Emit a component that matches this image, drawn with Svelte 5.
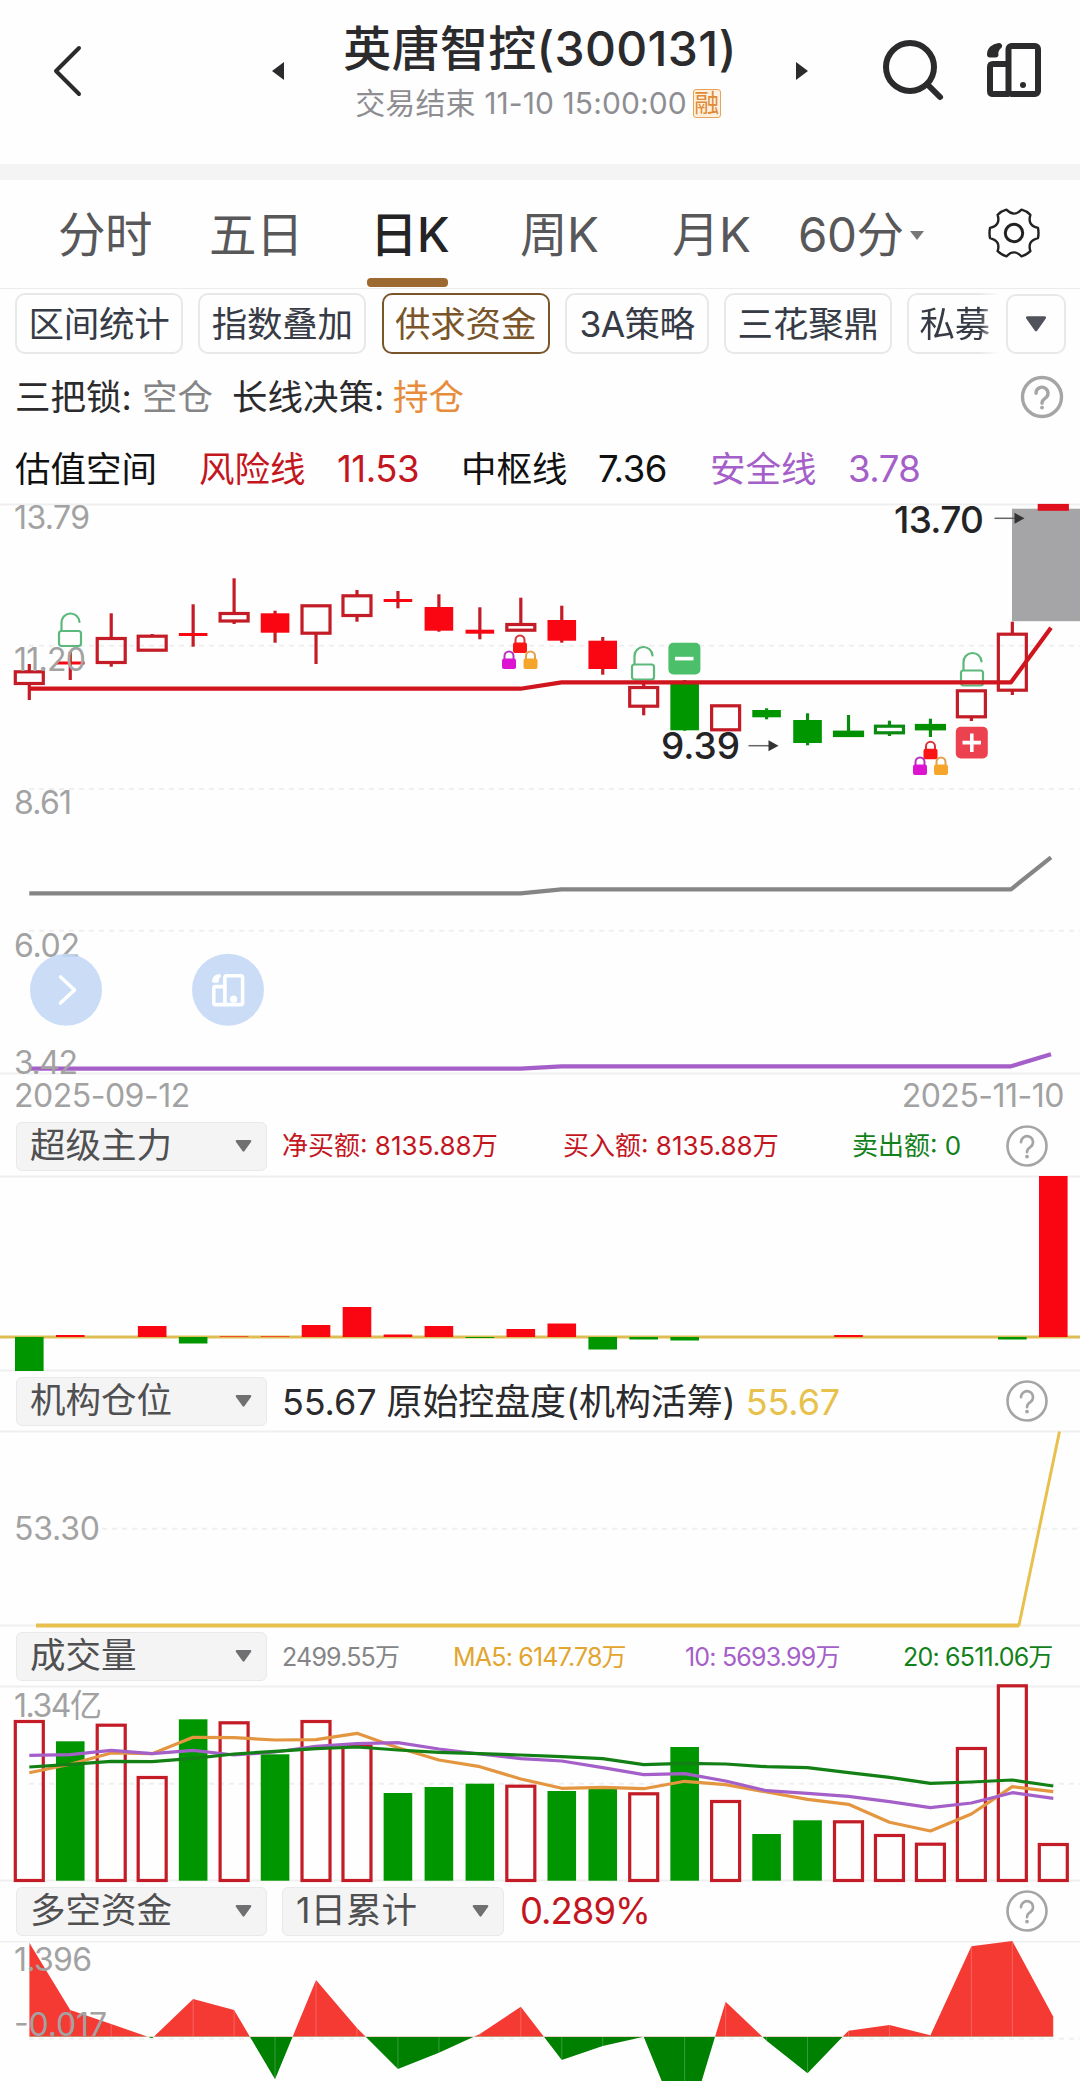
<script lang="ts">
    type Candle = {
        high: number;
        top: number;
        bottom: number;
        low: number;
        kind: 'hollow' | 'red' | 'green' | 'green-hollow';
    };

    const STEP = 40.96;
    const x = (i: number) => 29.3 + i * STEP;

    const tabs = ['分时', '五日', '日K', '周K', '月K'];
    const chips = ['区间统计', '指数叠加', '供求资金', '3A策略', '三花聚鼎', '私募'];

    const candle = (
        high: number,
        top: number,
        bottom: number,
        low: number,
        kind: Candle['kind'] = 'hollow'
    ): Candle => ({ high, top, bottom, low, kind });

    const candles: Candle[] = [
        candle(160, 166.3, 181, 196),
        candle(147.7, 157.5, 160.5, 176, 'red'),
        candle(109.3, 133, 160, 162.7),
        candle(130, 130.7, 147.7, 147.7),
        candle(100.3, 129, 132, 142.7, 'red'),
        candle(74.3, 108, 118.5, 120),
        candle(106.7, 109.3, 128.7, 138.7, 'red'),
        candle(100.3, 100.3, 130.7, 160),
        candle(86, 90.3, 113, 117.7),
        candle(87, 95, 98, 104.3, 'red'),
        candle(90.3, 103, 126.7, 127.7, 'red'),
        candle(103.3, 125.7, 129.7, 135.3, 'red'),
        candle(93.7, 119, 127.7, 127.7),
        candle(101.7, 116, 136.7, 138.7, 'red'),
        candle(133, 136.7, 165, 170.7, 'red'),
        candle(177.7, 182, 203.7, 211.3),
        candle(176, 179.3, 226.3, 226.7, 'green'),
        candle(200.3, 200.3, 227.3, 227.3),
        candle(204.3, 206, 213.3, 215.3, 'green'),
        candle(209.3, 216, 239, 241.3, 'green'),
        candle(211, 226.7, 233, 233, 'green-hollow'),
        candle(216.7, 220.7, 230.3, 232, 'green-hollow'),
        candle(214.7, 220, 226.3, 233, 'green-hollow'),
        candle(185.3, 185.3, 214.3, 217),
        candle(117.7, 128.7, 187.7, 191),
        candle(0, 0, 6.7, 6.7)
    ];

    // positive goes up from the zero line
    const mainForce = [
        -34, 2, 0, 11, -6.5, 0.6, 0.6, 12, 30, 2.5, 11, -1, 8, 13.5, -12.5, -2.5, -3.5, 0, 0, 0, 2, 0,
        0, 0, -2.5, 161
    ];

    const volumeTops = [
        34, 55.3, 37.7, 90, 33.3, 35.3, 68.3, 34, 59, 107, 101, 97.7, 98.7, 105, 103, 106.3, 61, 114,
        148, 134.3, 134.3, 148, 156.7, 61, -1.7, 157
    ];
    const falling = [1, 4, 6, 9, 10, 11, 13, 14, 16, 18, 19];

    const ma5 = [
        86.7, 78.3, 67, 67.7, 51.3, 51.7, 54, 53.7, 47.3, 61.7, 74, 80.7, 93, 102.3, 101.3, 102.7, 95.3,
        98.7, 106, 113.3, 118.3, 136.3, 145, 128, 100.7, 105.7
    ];
    const ma10 = [
        69.3, 68.7, 64.3, 67.7, 64.3, 69, 66, 60.3, 57.7, 56.7, 63, 68, 72.7, 75, 81.7, 88.7, 87.7, 95,
        104.7, 107.3, 110.3, 115.7, 121.7, 117, 106.7, 112.3
    ];
    const ma20 = [
        81, 78.3, 75.3, 75.7, 72.3, 68, 65.3, 62.7, 61, 64, 66.3, 67.7, 69, 70.7, 72.7, 78.7, 77.3, 78,
        80.7, 81.7, 86.7, 91.3, 97.3, 96, 94, 100
    ];

    const funds = [
        1.7, 69, 83, 97.3, 58, 69, 138.3, 39, 87, 128, 111.7, 93, 65.7, 119, 105, 95.7, 196.5, 60.7,
        99.7, 132.3, 89.7, 84, 94.3, 5.3, 0, 75.7
    ];

    const line = (ys: number[]) => ys.map((y, i) => `${x(i)},${y}`).join(' ');
    const fundsArea = `${x(0)},95.7 ${line(funds)} ${x(25)},95.7`;

    const step = (a: number, b: number, c: number) =>
        `29.3,${a} 520.5,${a} 561.6,${b} 1011,${b} 1051,${c}`;
</script>

{#snippet help(cls: string)}
    <svg class="help {cls}" width="44" height="44" viewBox="0 0 44 44">
        <circle cx="22" cy="22" r="19.5" />
        <path d="M16 18.2a6 6 0 1 1 9.3 5c-2.300 1.500-3.300 2.600-3.300 5" />
        <circle class="dot" cx="22" cy="32.600" r="1.900" />
    </svg>
{/snippet}

{#snippet rotateIcon()}
    <rect x="21.500" y="3" width="29.500" height="48" rx="3" />
    <path d="M21 21H6q-3 0-3 3v24q0 3 3 3h16" />
    <path d="M12 3C6.500 3.500 3 7 3 11.500h5.500C7.500 8 9 5.500 12 3Z" />
    <circle class="dot" cx="36" cy="42" r="3" />
{/snippet}

{#snippet caret()}
    <svg class="caret" width="17" height="14" viewBox="0 0 17 14">
        <path d="M2 1h13q2 0 1 2l-6.500 9q-1 1.400-2 0L1 3Q0 1 2 1Z" />
    </svg>
{/snippet}

{#snippet openLock(lx: number, ly: number)}
    <g class="open-lock" transform="translate({lx} {ly})">
        <rect x="1" y="18" width="22" height="15" rx="2.500" />
        <path d="M3.500 17.500V10a9 9 0 0 1 18-1" />
    </g>
{/snippet}

{#snippet lock(lx: number, ly: number, tone: string)}
    <g class="lock {tone}" transform="translate({lx} {ly})">
        <path d="M2.500 10V6a4.500 4.500 0 0 1 9 0v4" />
        <rect x="0" y="8.500" width="14" height="10.500" rx="2" />
    </g>
{/snippet}

{#snippet arrow(ax: number, ay: number)}
    <g class="arrow">
        <path class="shaft" d="M{ax} {ay}h22" />
        <path d="M{ax + 20} {ay - 5.500}l10 5.500l-10 5.500z" />
    </g>
{/snippet}

<div class="page">
    <header>
        <svg class="back" width="34" height="56" viewBox="0 0 34 56">
            <path d="M29 5L6 28l23 23" />
        </svg>
        <svg class="prev" width="12" height="18" viewBox="0 0 12 18"><path d="M12 0v18L0 9z" /></svg>
        <div class="title">
            <h1>英唐智控(300131)</h1>
            <p>交易结束 <span>11-10 15:00:00</span><span class="tag">融</span></p>
        </div>
        <svg class="next" width="12" height="18" viewBox="0 0 12 18"><path d="M0 0v18l12-9z" /></svg>
        <svg class="search" width="64" height="64" viewBox="0 0 64 64">
            <circle cx="29" cy="29" r="24" />
            <path d="M46.500 46.500L59 59" />
        </svg>
        <svg class="device" width="54" height="54" viewBox="0 0 54 54">{@render rotateIcon()}</svg>
    </header>

    <nav>
        {#each tabs as tab (tab)}
            <button class:active={tab === '日K'}>{tab}</button>
        {/each}
        <button class="period">60分<svg width="14" height="9" viewBox="0 0 14 9"><path d="M0 0h14L7 9z" /></svg></button>
        <svg class="gear" width="54" height="54" viewBox="-27 -27 54 54">
            <path
                d="M24 -5.100Q25 0 24 5.100Q13 7.800 16.400 18.200Q12.500 22 7.600 23.300Q0 15.500 -7.600 23.300Q-12.500 22 -16.400 18.200Q-13 7.800 -24 5.100Q-25 0 -24 -5.100Q-13 -7.800 -16.400 -18.200Q-12.500 -22 -7.600 -23.300Q0 -15.500 7.600 -23.300Q12.500 -22 16.400 -18.200Q13 -7.800 24 -5.100Z"
            />
            <circle r="8.700" />
        </svg>
    </nav>

    <div class="chips">
        {#each chips as chip (chip)}
            <button class:active={chip === '供求资金'} class:cut={chip === '私募'} class:short={chip === '3A策略'}>{chip}</button>
        {/each}
        <button class="more">{@render caret()}</button>
    </div>

    <div class="locks">
        <span>三把锁:</span>
        <span class="muted">空仓</span>
        <span>长线决策:</span>
        <span class="hold">持仓</span>
        {@render help('bold')}
    </div>

    <div class="valuation">
        <span>估值空间</span>
        <span class="risk">风险线</span>
        <span class="risk num">11.53</span>
        <span>中枢线</span>
        <span class="num">7.36</span>
        <span class="safe">安全线</span>
        <span class="safe num">3.78</span>
    </div>

    <svg class="chart" width="1080" height="570" viewBox="0 0 1080 570">
        <path class="rule" d="M0 .5H1080M0 569.500H1080" />
        <path class="dash" d="M29 141.700H1080M29 285H1080M29 426.700H1080" />
        <rect class="limit" x="1012" y="4.700" width="68" height="112.500" />

        {#each candles as c, i (i)}
            <g class="candle {c.kind}">
                {#if c.high < c.top}
                    <path d="M{x(i)} {c.high}V{c.top + 1}" />
                {/if}
                {#if c.low > c.bottom}
                    <path d="M{x(i)} {c.bottom - 1}V{c.low}" />
                {/if}
                {#if c.kind === 'hollow' || c.kind === 'green-hollow'}
                    <rect
                        class:flat={c.bottom - c.top < 7}
                        x={x(i) - 14}
                        y={c.top + 1.5}
                        width="28"
                        height={c.bottom - c.top - 3}
                    />
                {:else}
                    <rect class="solid" x={x(i) - 14.3} y={c.top} width="28.600" height={c.bottom - c.top} />
                {/if}
            </g>
        {/each}

        {@render openLock(58, 109)}
        {@render openLock(631, 142.5)}
        {@render openLock(960, 148.5)}

        <polyline class="risk-line" points={step(184.7, 178.3, 123.7)} />
        <polyline class="mid-line" points={step(389.3, 385.3, 353.3)} />
        <polyline class="safe-line" points={step(564.7, 562.3, 550.3)} />

        {@render lock(513, 130, 'tone-red')}
        {@render lock(502, 146, 'tone-purple')}
        {@render lock(523.5, 146, 'tone-amber')}
        {@render lock(923.5, 236.3, 'tone-red')}
        {@render lock(913, 252, 'tone-purple')}
        {@render lock(934, 252, 'tone-amber')}

        <rect class="sell" x="668.400" y="138.700" width="32" height="31.800" rx="5" />
        <path class="sign" d="M675 154.600h18.500" />
        <rect class="buy" x="955.800" y="222.700" width="32" height="31.800" rx="5" />
        <path class="sign" d="M962.500 238.600h18.500M971.800 229.500v18.500" />

        <text class="mark" x="894" y="28.700" textLength="90">13.70</text>
        {@render arrow(994.5, 14.3)}
        <text class="mark" x="661" y="255.300" textLength="79">9.39</text>
        {@render arrow(748.5, 241.7)}

        <g class="axis">
            <text x="14" y="24.500" textLength="76">13.79</text>
            <text x="14" y="167" textLength="72">11.20</text>
            <text x="14" y="309.500" textLength="58">8.61</text>
            <text x="14" y="452.500" textLength="66">6.02</text>
            <text x="14" y="569.500" textLength="64">3.42</text>
        </g>

        <circle class="float" cx="66" cy="485.700" r="36" />
        <path class="float-icon" d="M60.500 473l14 13-14 13" />
        <circle class="float" cx="228" cy="485.700" r="36" />
        <g class="float-icon" transform="translate(212 470) scale(.6)">{@render rotateIcon()}</g>
    </svg>

    <div class="dates"><span>2025-09-12</span><span>2025-11-10</span></div>

    <div class="panel-head">
        <button class="select">超级主力 {@render caret()}</button>
        <div class="figures flow">
            <span class="risk">净买额: 8135.88万</span>
            <span class="risk">买入额: 8135.88万</span>
            <span class="out">卖出额: 0</span>
        </div>
        {@render help('')}
    </div>
    <svg class="chart" width="1080" height="195" viewBox="0 0 1080 195">
        <path class="rule" d="M0 .5H1080M0 194.500H1080" />
        <path class="zero" d="M0 161H1080" />
        {#each mainForce as v, i (i)}
            <rect
                class={v > 0 ? 'up' : 'down'}
                x={x(i) - 14.3}
                y={v > 0 ? 161 - v : 161}
                width="28.600"
                height={Math.abs(v)}
            />
        {/each}
    </svg>

    <div class="panel-head">
        <button class="select">机构仓位 {@render caret()}</button>
        <div class="position">
            <span>55.67</span> 原始控盘度(机构活筹) <span class="gold">55.67</span>
        </div>
        {@render help('')}
    </div>
    <svg class="chart" width="1080" height="195" viewBox="0 0 1080 195">
        <path class="rule" d="M0 .5H1080M0 194.500H1080" />
        <path class="dash" d="M102 97.700H1080" />
        <polyline class="holding flat" points="36,194.500 1019,194.500" />
        <polyline class="holding" points="1017,194.500 1019,194 1059.500,.5" />
        <text class="axis" x="14" y="109" textLength="86">53.30</text>
    </svg>

    <div class="panel-head">
        <button class="select">成交量 {@render caret()}</button>
        <div class="figures averages">
            <span class="muted">2499.55万</span>
            <span class="ma5">MA5: 6147.78万</span>
            <span class="safe">10: 5693.99万</span>
            <span class="out">20: 6511.06万</span>
        </div>
    </div>
    <svg class="chart" width="1080" height="195" viewBox="0 0 1080 195">
        <path class="rule" d="M0 .5H1080M0 194.500H1080" />
        <path class="dash" d="M29 97.700H1080" />
        {#each volumeTops as top, i (i)}
            {#if falling.includes(i)}
                <rect class="down" x={x(i) - 14.3} y={top} width="28.600" height={194.7 - top} />
            {:else}
                <rect class="up-outline" x={x(i) - 14} y={top + 1.5} width="28" height={193 - top} />
            {/if}
        {/each}
        <polyline class="avg ma5-line" points={line(ma5)} />
        <polyline class="avg ma10-line" points={line(ma10)} />
        <polyline class="avg ma20-line" points={line(ma20)} />
        <text class="axis" x="14" y="30.500" textLength="88">1.34亿</text>
    </svg>

    <div class="panel-head">
        <button class="select">多空资金 {@render caret()}</button>
        <button class="select days">1日累计 {@render caret()}</button>
        <span class="risk percent">0.289%</span>
        {@render help('')}
    </div>
    <svg class="chart last" width="1080" height="140" viewBox="0 0 1080 140">
        <clipPath id="above"><rect x="0" y="0" width="1080" height="95.700" /></clipPath>
        <clipPath id="below"><rect x="0" y="95.700" width="1080" height="44.300" /></clipPath>
        <path class="rule" d="M0 .5H1080" />
        <path class="dash" d="M29 97.700H1080" />
        <polygon class="inflow" points={fundsArea} clip-path="url(#above)" />
        <polygon class="outflow" points={fundsArea} clip-path="url(#below)" />
        {#each funds as y, i (i)}
            <path class="seam" d="M{x(i)} 95.700V{y}" />
        {/each}
        <g class="axis">
            <text x="14" y="29.700" textLength="78">1.396</text>
            <text x="14" y="94.500" textLength="93">-0.017</text>
        </g>
    </svg>
</div>

<style>
    :global(body) {
        margin: 0;
        background: #fff;
    }

    .page {
        width: 1080px;
        height: 2081px;
        overflow: hidden;
        background: #fefefe;
        font-family: 'Inter', 'Noto Sans CJK SC', sans-serif;
        color: #2b2b2d;
    }

    svg {
        display: block;
        flex-shrink: 0;
        fill: none;
    }

    button {
        background: none;
        border: none;
        margin: 0;
        padding: 0;
        font: inherit;
        color: inherit;
        white-space: nowrap;
    }

    header {
        display: flex;
        align-items: flex-start;
        height: 164px;
        box-sizing: border-box;
        padding-left: 50px;
    }

    .back {
        margin-top: 43px;
        stroke: #2b2b2d;
        stroke-width: 4;
        stroke-linecap: round;
        stroke-linejoin: round;
    }

    .prev,
    .next {
        margin-top: 62px;
        fill: #2b2b2d;
    }

    .prev {
        margin-left: 188px;
    }

    .title {
        width: 512px;
        padding-top: 15px;
        text-align: center;
    }

    h1 {
        margin: 0;
        font-size: 48px;
        font-weight: 500;
        line-height: 68px;
        letter-spacing: 0.3px;
        white-space: nowrap;
    }

    .title p {
        display: flex;
        justify-content: center;
        align-items: center;
        margin: 1px 4px 0 0;
        font-size: 30px;
        line-height: 38px;
        letter-spacing: 0.1px;
        color: #8e8e92;
        white-space: pre;
    }

    .tag {
        margin-left: 6px;
        width: 26px;
        height: 27px;
        border: 1.5px solid #e9a25a;
        border-radius: 3px;
        background: #fdf0dc;
        color: #e08a35;
        font-size: 25px;
        line-height: 26px;
    }

    .search {
        margin: 38px 0 0 73px;
        stroke: #2b2b2d;
        stroke-width: 6;
        stroke-linecap: round;
    }

    .device {
        margin: 43px 0 0 42px;
        stroke: #2b2b2d;
        stroke-width: 6;
        stroke-linejoin: round;
    }

    .device .dot {
        fill: #2b2b2d;
        stroke: none;
    }

    nav {
        display: grid;
        grid-template-columns: 151px 157px 154px 152px 126px 189px 60px;
        align-items: start;
        box-sizing: border-box;
        height: 125px;
        padding-left: 58px;
        border-top: 16px solid #f4f4f4;
        border-bottom: 1px solid #ececec;
        font-size: 47.5px;
        line-height: 110px;
        color: #58585a;
    }

    nav button {
        position: relative;
        text-align: left;
        letter-spacing: -0.5px;
    }

    nav button.active {
        color: #242426;
        font-weight: 500;
        padding-left: 4px;
    }

    nav button.active::after {
        content: '';
        position: absolute;
        left: 1px;
        top: 98px;
        width: 81px;
        height: 9px;
        border-radius: 4px;
        background: #9c6930;
    }

    .period {
        display: flex;
        align-items: center;
        gap: 7px;
    }

    .period svg {
        fill: #777;
    }

    .gear {
        margin-top: 26px;
        stroke: #222;
        stroke-width: 2.4;
        stroke-linejoin: round;
    }

    .gear circle {
        stroke-width: 3;
    }

    .chips {
        display: flex;
        gap: 15.3px;
        height: 72px;
        box-sizing: border-box;
        padding: 4px 0 8px 15px;
        font-size: 35.5px;
        color: #363b46;
    }

    .chips button {
        flex-shrink: 0;
        box-sizing: border-box;
        width: 168px;
        height: 61px;
        border: 2px solid #e8e8ea;
        border-radius: 10px;
        padding-top: 2px;
        line-height: 56px;
        letter-spacing: -0.2px;
    }

    .chips button.short {
        width: 144px;
        letter-spacing: -0.6px;
    }

    .chips button.active {
        border-color: #7b552a;
        color: #7b552a;
    }

    .chips button.cut {
        width: 93px;
        border-right: none;
        border-radius: 10px 0 0 10px;
        text-align: left;
        padding-left: 10px;
        mask-image: linear-gradient(90deg, #000 78%, transparent);
    }

    .chips button.more {
        display: flex;
        align-items: center;
        justify-content: center;
        width: 60px;
        height: 60px;
        margin: 1px 0 0 -10px;
        padding: 0;
    }

    .caret {
        fill: #707072;
    }

    .more .caret {
        width: 22px;
        height: 18px;
        fill: #50535b;
    }

    .locks {
        display: grid;
        grid-template-columns: 127px 90px 161px 627px auto;
        align-items: center;
        height: 72px;
        padding-left: 15px;
        font-size: 35.5px;
        line-height: 74px;
    }

    .muted {
        color: #858587;
    }

    .hold {
        color: #e68c3a;
    }

    .help {
        stroke: #a5a5a5;
        stroke-width: 2.6;
        stroke-linecap: round;
    }

    .help.bold {
        stroke-width: 3.4;
        margin-top: -3px;
    }

    .help .dot {
        fill: #a5a5a5;
        stroke: none;
    }

    .valuation {
        display: grid;
        grid-template-columns: 184px 138px 124px 137px 112px 138px auto;
        height: 71px;
        padding-left: 15px;
        font-size: 35.5px;
        line-height: 73px;
        color: #111;
    }

    .valuation .num {
        font-size: 36.5px;
        letter-spacing: -0.5px;
    }

    .valuation .risk,
    .risk {
        color: #c4161e;
    }

    .valuation .safe,
    .safe {
        color: #a55fc9;
    }

    .out {
        color: #12811a;
    }

    .averages .ma5 {
        color: #e2a52f;
    }

    .gold {
        color: #e8c14c;
    }

    .chart {
        overflow: visible;
    }

    .chart.last {
        overflow: hidden;
    }

    .rule {
        stroke: #efefef;
        stroke-width: 2;
    }

    .dash {
        stroke: #efefef;
        stroke-width: 2;
        stroke-dasharray: 5 5;
    }

    .limit {
        fill: #a5a5a7;
    }

    .candle {
        stroke: #c41c26;
        stroke-width: 3.2;
    }

    .candle.green,
    .candle.green-hollow {
        stroke: #0b8a12;
    }

    .candle .solid {
        stroke: none;
        fill: #fa0512;
    }

    .candle.green .solid {
        fill: #009600;
    }

    .candle .flat {
        fill: #e00f1c;
        stroke: #e00f1c;
    }

    .candle.green-hollow .flat {
        fill: #009000;
        stroke: #009000;
    }

    .open-lock {
        stroke: #5cb87b;
        stroke-width: 2.2;
        stroke-linecap: round;
    }

    .lock path {
        stroke-width: 2;
    }

    .lock rect {
        stroke: none;
    }

    .tone-red {
        stroke: #d8323a;
        fill: #fa1414;
    }

    .tone-purple {
        stroke: #b830c0;
        fill: #dc14d2;
    }

    .tone-amber {
        stroke: #e3a04a;
        fill: #f5a52a;
    }

    .lock path {
        fill: none;
    }

    .risk-line,
    .mid-line,
    .safe-line {
        stroke-width: 4.2;
        stroke-linejoin: round;
    }

    .risk-line {
        stroke: #d0151f;
    }

    .mid-line {
        stroke: #858585;
    }

    .safe-line {
        stroke: #a55fc9;
    }

    .sell {
        fill: #4bbf6a;
    }

    .buy {
        fill: #ec4250;
    }

    .sign {
        stroke: #fff;
        stroke-width: 3.6;
    }

    .mark {
        fill: #242426;
        font-size: 37px;
        font-weight: 500;
    }

    .arrow {
        fill: #333;
    }

    .shaft {
        stroke: #666;
        stroke-width: 1.5;
    }

    .axis {
        fill: #a2a2a2;
        font-size: 32px;
    }

    .float {
        fill: #c3d7f5;
        fill-opacity: 0.88;
    }

    .float-icon {
        stroke: #fff;
        stroke-width: 3.6;
        stroke-linecap: round;
        stroke-linejoin: round;
    }

    g.float-icon {
        stroke-width: 6;
    }

    .dates {
        display: flex;
        justify-content: space-between;
        height: 42px;
        padding: 0 16px 0 14px;
        font-size: 32px;
        line-height: 44px;
        letter-spacing: -0.5px;
        color: #a2a2a2;
    }

    .panel-head {
        display: flex;
        align-items: center;
        height: 60px;
        padding: 0 31px 0 16px;
    }

    .select {
        display: flex;
        flex-shrink: 0;
        align-items: center;
        justify-content: space-between;
        box-sizing: border-box;
        width: 251px;
        height: 49px;
        padding: 0 14px 0 13px;
        border: 1px solid #e9e9e9;
        border-radius: 6px;
        background: #f4f4f4;
        font-size: 35.5px;
        line-height: 50px;
        color: #505052;
    }

    .days {
        width: 222px;
        margin-left: 15px;
    }

    .percent {
        margin-left: 16px;
        font-size: 36.5px;
        letter-spacing: -1px;
    }

    .figures {
        display: grid;
        flex-shrink: 0;
        margin: -5px 0 0 15px;
        font-size: 26px;
        white-space: nowrap;
    }

    .flow {
        grid-template-columns: 281px 289px auto;
    }

    .averages {
        grid-template-columns: 171px 232px 218px auto;
        margin-top: -3px;
        font-size: 25px;
        letter-spacing: -0.8px;
    }

    .position {
        margin: -4px 0 0 15px;
        font-size: 36px;
        letter-spacing: -0.1px;
        white-space: nowrap;
    }

    .panel-head .help {
        margin-left: auto;
    }

    .zero {
        stroke: #dfbd55;
        stroke-width: 3;
    }

    .up {
        fill: #fa0512;
    }

    .down {
        fill: #009600;
    }

    .up-outline {
        stroke: #c41c26;
        stroke-width: 3.2;
    }

    .holding {
        stroke: #e8c04d;
        stroke-width: 3;
        stroke-linejoin: round;
    }

    .holding.flat {
        stroke-width: 4;
    }

    .avg {
        stroke-width: 3.2;
        stroke-linejoin: round;
    }

    .ma5-line {
        stroke: #e3963f;
    }

    .ma10-line {
        stroke: #a55fc9;
    }

    .ma20-line {
        stroke: #128014;
    }

    .inflow {
        fill: #f43a33;
    }

    .outflow {
        fill: #008000;
    }

    .seam {
        stroke: #fff;
        stroke-width: 1;
        stroke-opacity: 0.22;
    }
</style>
